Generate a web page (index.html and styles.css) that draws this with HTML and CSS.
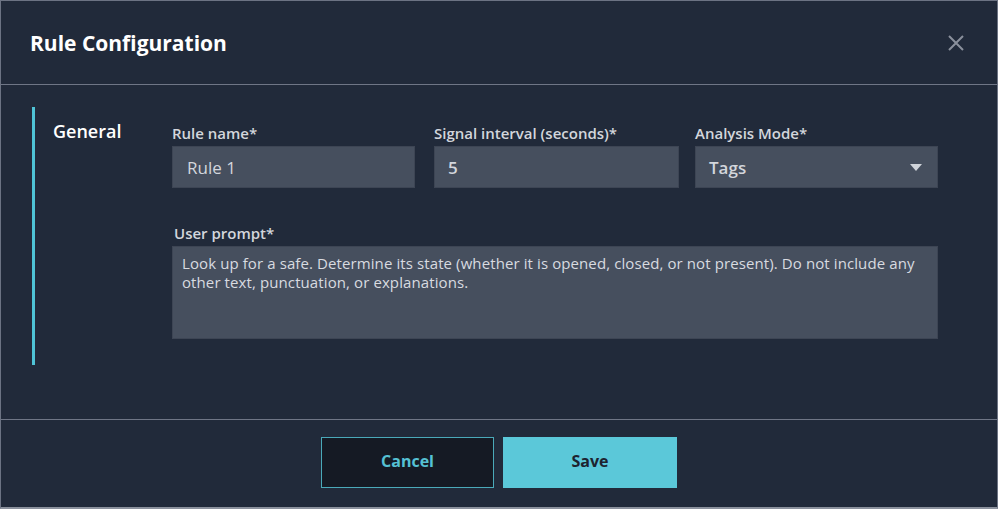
FILE: index.html
```html
<!DOCTYPE html>
<html>
<head>
<meta charset="utf-8">
<link rel="stylesheet" href="styles.css">
</head>
<body>
<div class="modal">
  <header class="modal-header">
    <h1 class="title">Rule Configuration</h1>
    <button class="close" aria-label="Close">
      <svg width="16" height="16" viewBox="0 0 16 16"><path d="M1 1L15 15M15 1L1 15" stroke="#8a909c" stroke-width="2" fill="none"/></svg>
    </button>
  </header>
  <main class="modal-body">
    <section class="section">
      <div class="section-title">General</div>
      <div class="fields">
        <div class="row">
          <div class="field f1">
            <label class="label">Rule name*</label>
            <div class="input">Rule 1</div>
          </div>
          <div class="field f2">
            <label class="label">Signal interval (seconds)*</label>
            <div class="input">5</div>
          </div>
          <div class="field f3">
            <label class="label">Analysis Mode*</label>
            <div class="input select"><span>Tags</span>
              <svg width="12" height="7" viewBox="0 0 12 7"><path d="M0 0H12L6 7Z" fill="#d0d4da"/></svg>
            </div>
          </div>
        </div>
        <div class="field prompt">
          <label class="label label-prompt">User prompt*</label>
          <div class="textarea">Look up for a safe. Determine its state (whether it is opened, closed, or not present). Do not include any other text, punctuation, or explanations.</div>
        </div>
      </div>
    </section>
  </main>
  <footer class="modal-footer">
    <button class="btn btn-cancel">Cancel</button>
    <button class="btn btn-save">Save</button>
  </footer>
</div>
</body>
</html>
```

FILE: styles.css
```css
* { box-sizing: border-box; }
html, body { margin: 0; padding: 0; background: #212a3a; }
body { font-family: "Open Sans", "Noto Sans", sans-serif; }
.modal {
  width: 998px;
  height: 509px;
  background: #212a3a;
  border: 1px solid #6c7383;
  border-bottom: 2px solid #8b919d;
  display: flex;
  flex-direction: column;
}
.modal-header {
  height: 84px;
  flex: none;
  border-bottom: 1px solid #6f7686;
  display: flex;
  align-items: center;
  justify-content: space-between;
  padding: 0 33px 0 29px;
}
.title {
  margin: 0;
  font-size: 21px;
  font-weight: 700;
  color: #ffffff;
}
.close {
  background: none;
  border: 0;
  padding: 0;
  width: 16px;
  height: 16px;
  display: flex;
}
.modal-body {
  flex: none;
  height: 335px;
  border-bottom: 1px solid #6f7686;
  padding: 22px 0 0 31px;
}
.section {
  height: 258px;
  border-left: 3px solid #4fc3d6;
  display: flex;
  padding: 12px 0 0 18px;
}
.section-title {
  width: 119px;
  font-size: 18px;
  font-weight: 600;
  color: #ffffff;
  line-height: 24px;
}
.fields { display: flex; flex-direction: column; }
.row { display: flex; }
.f1 { width: 243px; }
.f2 { width: 245px; margin-left: 19px; }
.f3 { width: 243px; margin-left: 16px; }
.label {
  display: block;
  font-size: 15px;
  font-weight: 600;
  color: #d3d6dc;
  line-height: 20px;
  height: 27px;
  padding-top: 4px;
}
.input {
  height: 42px;
  background: #464f5e;
  border: 1px solid #3d4554;
  color: #d3d6dc;
  font-size: 17px;
  font-weight: 600;
  display: flex;
  align-items: center;
  padding-left: 13px;
}
.f1 .input { padding-left: 14px; font-weight: 500; }
.select { justify-content: space-between; padding-right: 15px; }
.prompt { margin-top: 31px; width: 766px; }
.label-prompt { padding-left: 2px; }
.textarea {
  height: 93px;
  background: #464f5e;
  border: 1px solid #3d4554;
  color: #d8dbe0;
  font-size: 15px;
  letter-spacing: 0.1px;
  line-height: 19px;
  padding: 7px 9px;
}
.modal-footer {
  flex: 1;
  display: flex;
  justify-content: center;
  align-items: flex-start;
  padding-top: 17px;
  gap: 9px;
}
.btn {
  width: 174px;
  height: 51px;
  font-family: "Open Sans", "Noto Sans", sans-serif;
  font-size: 16px;
  font-weight: 700;
  border: 1px solid #4aa9b9;
  padding: 0 0 3px;
  cursor: pointer;
}
.btn-cancel { background: #151a24; color: #55c1d4; width: 173px; }
.btn-save { background: #5bc8d9; color: #1d2330; border-color: #5bc8d9; }
```
